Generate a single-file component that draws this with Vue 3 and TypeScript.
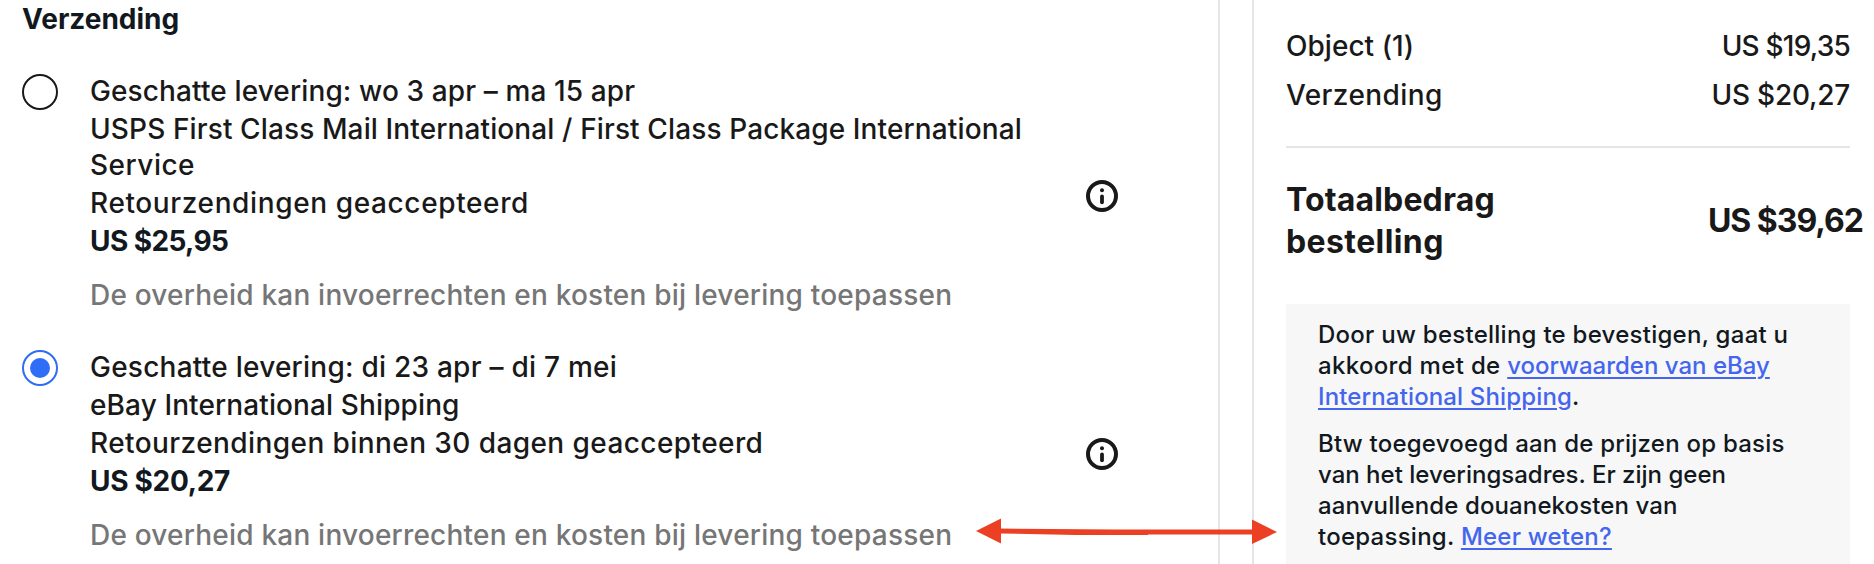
<script setup lang="ts">
import { ref } from 'vue'

interface Line {
  text: string
  tracking: number
  type?: 'wrapped' | 'price' | 'notice'
}

interface ShippingOption {
  id: string
  lines: Line[]
}

const selected = ref('eis')

const options: ShippingOption[] = [
  {
    id: 'usps',
    lines: [
      { text: 'Geschatte levering: wo 3 apr – ma 15 apr', tracking: 0.12 },
      { text: 'USPS First Class Mail International / First Class Package International', tracking: 0.12 },
      { text: 'Service', tracking: 0.5, type: 'wrapped' },
      { text: 'Retourzendingen geaccepteerd', tracking: 0.62 },
      { text: 'US $25,95', tracking: -0.6, type: 'price' },
      { text: 'De overheid kan invoerrechten en kosten bij levering toepassen', tracking: 0.21, type: 'notice' }
    ]
  },
  {
    id: 'eis',
    lines: [
      { text: 'Geschatte levering: di 23 apr – di 7 mei', tracking: 0.24 },
      { text: 'eBay International Shipping', tracking: 0.11 },
      { text: 'Retourzendingen binnen 30 dagen geaccepteerd', tracking: 0.42 },
      { text: 'US $20,27', tracking: -0.3, type: 'price' },
      { text: 'De overheid kan invoerrechten en kosten bij levering toepassen', tracking: 0.21, type: 'notice' }
    ]
  }
]

const spacing = (tracking: number) => ({ letterSpacing: `${tracking}px` })
</script>

<template>
  <div class="checkout">
    <section class="shipping">
      <h2 class="heading">Verzending</h2>

      <div v-for="option in options" :key="option.id" class="option" @click="selected = option.id">
        <span class="radio" :class="{ checked: selected === option.id }"></span>
        <div class="details">
          <div
            v-for="line in option.lines"
            :key="line.text"
            class="line"
            :class="line.type"
            :style="spacing(line.tracking)"
          >{{ line.text }}</div>
        </div>
        <svg class="info" viewBox="0 0 32 32">
          <circle cx="16" cy="16" r="14" fill="none" stroke="#191919" stroke-width="4" />
          <circle cx="16" cy="10.2" r="2" fill="#191919" />
          <path d="M16 16.5v5.8" stroke="#191919" stroke-width="3.8" stroke-linecap="round" />
        </svg>
      </div>
    </section>

    <aside class="summary">
      <div class="row">
        <span :style="spacing(0.03)">Object (1)</span>
        <span :style="spacing(-0.8)">US $19,35</span>
      </div>
      <div class="row">
        <span :style="spacing(0.4)">Verzending</span>
        <span :style="spacing(-0.25)">US $20,27</span>
      </div>
      <hr class="divider">
      <div class="total">
        <div>
          <div :style="spacing(0.15)">Totaalbedrag</div>
          <div :style="spacing(0.4)">bestelling</div>
        </div>
        <div class="total-price">US $39,62</div>
      </div>

      <div class="terms">
        <p>
          <span :style="spacing(0.26)">Door uw bestelling te bevestigen, gaat u</span><br>
          <span :style="spacing(0.33)">akkoord met de </span><a href="#" @click.prevent>voorwaarden van eBay<br><span :style="spacing(0.14)">International Shipping</span></a>.
        </p>
        <p>
          <span :style="spacing(0.23)">Btw toegevoegd aan de prijzen op basis</span><br>
          van het leveringsadres. Er zijn geen<br>
          <span :style="spacing(0.12)">aanvullende douanekosten van</span><br>
          <span :style="spacing(0.25)">toepassing. </span><a href="#" :style="spacing(0.23)" @click.prevent>Meer weten?</a>
        </p>
      </div>
    </aside>

    <svg class="arrow" viewBox="0 0 302 28">
      <path d="M24 10.5L140 11.5H277V16.5H172V17H100L24 15.5Z" fill="#ec4024" />
      <path d="M0 13L25 0.5V25.5Z" fill="#ec4024" />
      <path d="M301 14L276 1.5V26Z" fill="#ec4024" />
    </svg>
  </div>
</template>

<style>
body {
  background: #fff;
}
</style>

<style scoped>
.checkout {
  position: relative;
  display: flex;
  gap: 32px;
  width: 1874px;
  height: 564px;
  overflow: hidden;
  box-sizing: border-box;
  font-family: Inter, "Liberation Sans", sans-serif;
  font-size: 28px;
  font-weight: 500;
  line-height: 38px;
  color: #191919;
  white-space: nowrap;
}

.shipping {
  flex: none;
  width: 1220px;
  padding-left: 22px;
  box-sizing: border-box;
  border-right: 2px solid #e5e5e5;
}

.heading {
  margin: 0 0 33.5px;
  font-size: 28px;
  font-weight: 700;
  color: #111820;
}

.option {
  display: flex;
  align-items: center;
  margin-bottom: 34px;
}

.radio {
  display: flex;
  align-items: center;
  justify-content: center;
  align-self: flex-start;
  flex: none;
  width: 36px;
  height: 36px;
  margin: 2px 32px 0 0;
  box-sizing: border-box;
  border: 2px solid #191919;
  border-radius: 50%;
}

.radio.checked {
  border-color: #2f6df6;
}

.radio.checked::after {
  content: '';
  width: 20px;
  height: 20px;
  border-radius: 50%;
  background: #2f6df6;
}

.details {
  width: 996px;
}

.wrapped {
  margin-bottom: 2.5px;
  line-height: 34px;
}

.price {
  font-weight: 700;
  color: #111820;
}

.notice {
  margin-top: 16px;
  color: #767676;
}

.info {
  width: 32px;
  height: 32px;
  margin-top: 6px;
}

.summary {
  flex: none;
  width: 622px;
  padding: 26.5px 24px 0 32px;
  box-sizing: border-box;
  border-left: 2px solid #e5e5e5;
}

.row {
  display: flex;
  justify-content: space-between;
  margin-bottom: 11.5px;
}

.divider {
  height: 2px;
  margin: 32px 0 31px;
  border: none;
  background: #e5e5e5;
}

.total {
  display: flex;
  align-items: center;
  justify-content: space-between;
  margin-right: -13px;
  font-size: 32px;
  font-weight: 700;
  line-height: 42.3px;
}

.total-price {
  letter-spacing: -1px;
}

.terms {
  height: 300px;
  margin-top: 40px;
  padding: 15.5px 32px 0;
  background: #f7f7f7;
  font-size: 24px;
  line-height: 31px;
  color: #111820;
}

.terms p {
  margin: 0 0 15.5px;
}

.terms a {
  color: #4466ee;
  text-decoration: underline;
  text-decoration-thickness: 2px;
  text-underline-offset: 3px;
}

/* Annotation arrow lying over both columns */
.arrow {
  position: absolute;
  left: 976px;
  top: 518px;
  width: 302px;
  height: 28px;
}
</style>
